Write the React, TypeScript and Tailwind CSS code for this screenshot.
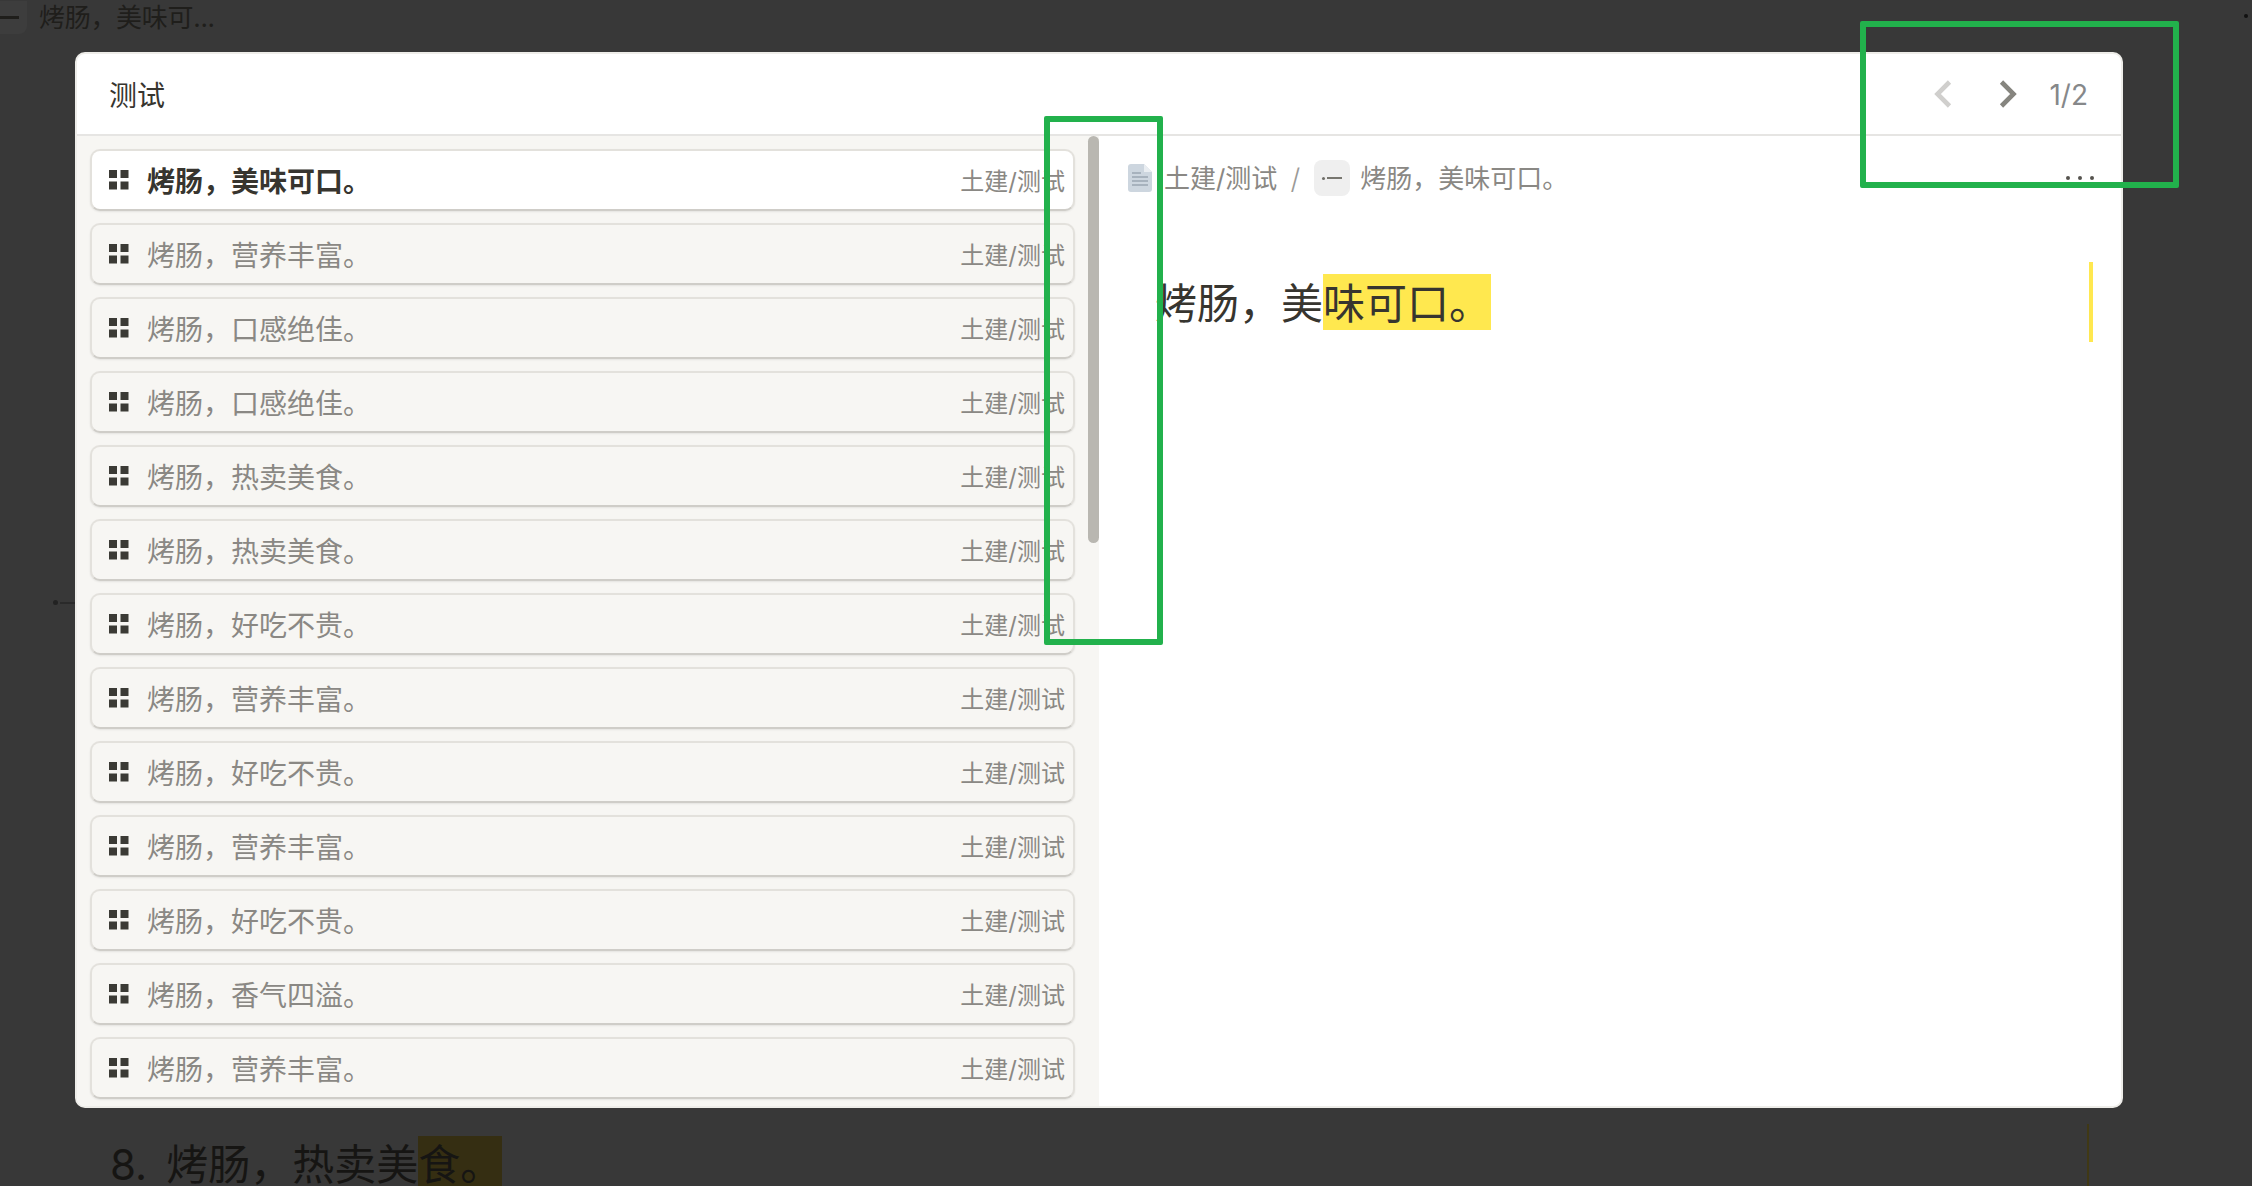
const items = [
  "烤肠，美味可口。",
  "烤肠，营养丰富。",
  "烤肠，口感绝佳。",
  "烤肠，口感绝佳。",
  "烤肠，热卖美食。",
  "烤肠，热卖美食。",
  "烤肠，好吃不贵。",
  "烤肠，营养丰富。",
  "烤肠，好吃不贵。",
  "烤肠，营养丰富。",
  "烤肠，好吃不贵。",
  "烤肠，香气四溢。",
  "烤肠，营养丰富。",
];

function GridIcon() {
  return (
    <svg width="20" height="20" viewBox="0 0 20 20" className="shrink-0 fill-[#3b3a35]">
      <rect x="0" y="0" width="8" height="8" />
      <rect x="11.5" y="0" width="8" height="8" />
      <rect x="0" y="11.5" width="8" height="8" />
      <rect x="11.5" y="11.5" width="8" height="8" />
    </svg>
  );
}

function DocIcon() {
  return (
    <svg width="24" height="28" viewBox="0 0 24 28" className="shrink-0">
      <path d="M3 0h13l8 8v17a3 3 0 0 1-3 3H3a3 3 0 0 1-3-3V3a3 3 0 0 1 3-3z" fill="#cdd6df" />
      <path d="M16 0l8 8h-8z" fill="#e9edf1" />
      <path d="M4 9h9M4 13h16M4 17h16M4 21h16" stroke="#9aa6b2" strokeWidth="1.4" />
    </svg>
  );
}

function Chevron({ dir, color }: { dir: "left" | "right"; color: string }) {
  return (
    <svg width="18" height="28" viewBox="0 0 18 28" fill="none" className={`shrink-0 ${color}`}>
      <path
        d={dir === "left" ? "M15.5 2L3.5 14l12 12" : "M2.5 2l12 12-12 12"}
        stroke="currentColor"
        strokeWidth="4.6"
      />
    </svg>
  );
}

function ListRow({ text, active }: { text: string; active: boolean }) {
  return (
    <div
      className={`flex h-[62px] shrink-0 items-center rounded-[10px] border-2 border-[#e3e1dc] border-b-[#cfcdc8] pl-[17px] pr-[8px] shadow-[0_1px_2px_rgba(0,0,0,0.08)] ${
        active ? "bg-white" : "bg-[#f7f6f3]"
      }`}
    >
      <GridIcon />
      <span
        className={`ml-[18px] mt-[3px] flex-1 text-[28px] leading-none ${
          active ? "font-bold text-[#37352f]" : "text-[#8a8884]"
        }`}
      >
        {text}
      </span>
      <span className="mt-[3px] text-[24px] leading-none text-[#8a8884]">土建/测试</span>
    </div>
  );
}

export default function App() {
  return (
    <div className="relative h-[1186px] w-[2252px] overflow-hidden bg-[#383838] font-['Inter','Noto_Sans_CJK_SC',sans-serif]">
      {/* dimmed page behind the dialog */}
      <div className="flex h-[34px] items-center text-[26px] text-[#1f1e1b]">
        <div className="flex h-[33px] w-[27px] items-center rounded-br-lg bg-[#3d3d3d]">
          <div className="h-[3px] w-[19px] bg-[#1f1e1b]" />
        </div>
        <span className="ml-[12px] tracking-[-0.3px]">烤肠，美味可...</span>
      </div>
      <div className="absolute left-[110px] top-[1136px] flex h-[50px] items-start text-[42px] leading-[58px] text-[#161513]">
        <span className="mr-[19px]">8.</span>
        <span>烤肠，热卖美</span>
        <span className="bg-[#352e12]">食。</span>
      </div>
      <div className="absolute left-[2087px] top-[1124px] h-[62px] w-[2px] bg-[#3f3815]" />
      <div className="absolute left-[2244px] top-[14px] h-[4px] w-[4px] rounded-full bg-[#111]" />
      <div className="absolute left-[53px] top-[600px] flex items-center gap-[2px]">
        <span className="h-[5px] w-[5px] rounded-full bg-[#222]" />
        <span className="h-[2px] w-[16px] bg-[#2a2a2a]" />
      </div>

      {/* dialog */}
      <div className="absolute left-[75px] top-[52px] flex h-[1056px] w-[2048px] flex-col overflow-hidden rounded-[10px] border-2 border-[#eeede9] bg-white">
        <div className="flex h-[82px] shrink-0 items-center border-b-2 border-[#e6e5e3] pl-[32px] pr-[33px]">
          <span className="mt-[3px] flex-1 text-[28px] leading-none text-[#37352f]">测试</span>
          <Chevron dir="left" color="text-[#d0cfcd]" />
          <Chevron dir="right" color="ml-[47px] text-[#86857f]" />
          <span className="ml-[32px] mt-[2px] text-[28px] leading-none text-[#86888a]">1/2</span>
        </div>
        <div className="flex min-h-0 flex-1">
          <div className="relative flex w-[1022px] shrink-0 flex-col gap-[12px] overflow-hidden bg-[#f7f6f3] pl-[13px] pr-[24px] pt-[13px]">
            {items.map((text, i) => (
              <ListRow key={i} text={text} active={i === 0} />
            ))}
            <div className="absolute right-0 top-0 h-[407px] w-[11px] rounded-full bg-[#b9b7b1]" />
          </div>
          <div className="relative min-w-0 flex-1 pl-[29px] pr-[30px] pt-[24px]">
            <div className="flex h-[36px] items-center text-[26px] leading-none text-[#8a8884]">
              <DocIcon />
              <span className="ml-[12px] mt-[2px]">土建/测试</span>
              <span className="ml-[13px] mt-[2px] text-[28px] font-light text-[#9b9a97]">/</span>
              <div className="ml-[14px] flex h-[36px] w-[36px] items-center justify-center rounded-lg bg-[#efefef]">
                <span className="h-[3px] w-[3px] rounded-full bg-[#6f6e69]" />
                <span className="ml-[2px] h-[2px] w-[15px] bg-[#77766f]" />
              </div>
              <span className="ml-[10px] mt-[2px]">烤肠，美味可口。</span>
            </div>
            <div className="absolute right-[27px] top-[40px] flex gap-[8px]">
              <span className="h-[4px] w-[4px] rounded-full bg-[#55534e]" />
              <span className="h-[4px] w-[4px] rounded-full bg-[#55534e]" />
              <span className="h-[4px] w-[4px] rounded-full bg-[#55534e]" />
            </div>
            <div className="ml-[27px] mt-[78px] flex text-[42px] leading-[52px] text-[#37352f]">
              <span className="h-[56px] pt-[4px]">烤肠，美</span>
              <span className="h-[56px] bg-[#ffe84f] pt-[4px]">味可口。</span>
            </div>
            <div className="absolute right-[28px] top-[126px] h-[80px] w-[4px] bg-[#ffe84f]" />
          </div>
        </div>
      </div>

      {/* annotation boxes */}
      <div className="absolute left-[1044px] top-[116px] h-[529px] w-[119px] rounded-[2px] border-[6px] border-[#22b14c]" />
      <div className="absolute left-[1860px] top-[21px] h-[167px] w-[319px] rounded-[2px] border-[6px] border-[#22b14c]" />
    </div>
  );
}
